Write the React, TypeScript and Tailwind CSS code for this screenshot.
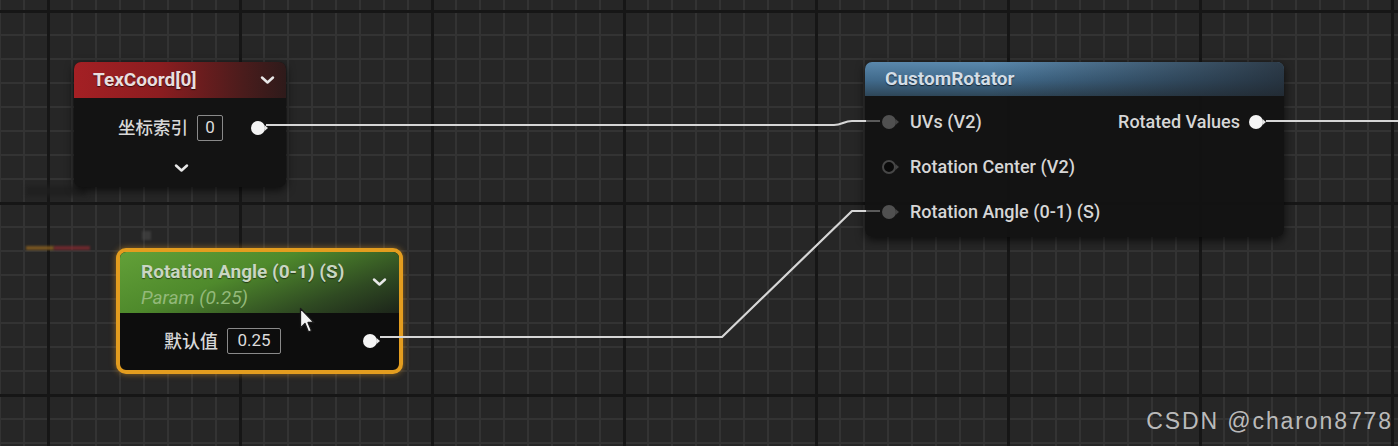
import React from 'react';

type PinKind = 'white' | 'gray' | 'hollow';

const Pin: React.FC<{ kind: PinKind }> = ({ kind }) => (
  <svg width="20" height="16" viewBox="0 0 20 16" className="shrink-0">
    {kind === 'hollow' ? (
      <circle cx="8" cy="8" r="6" fill="#0a0a0a" stroke="#474747" strokeWidth="2" />
    ) : (
      <circle cx="8" cy="8" r="7" fill={kind === 'white' ? '#f4f4f4' : '#505050'} />
    )}
    <path d="M14.5 5 L18 8 L14.5 11 Z" fill={kind === 'white' ? '#e6e6e6' : '#454545'} />
  </svg>
);

const Chevron: React.FC<{ color?: string }> = ({ color = '#e8e8e8' }) => (
  <svg width="15" height="10" viewBox="0 0 15 10" className="shrink-0">
    <path d="M2 2.5 L7.5 7.5 L13 2.5" fill="none" stroke={color} strokeWidth="2.5" strokeLinecap="round" strokeLinejoin="round" />
  </svg>
);

const ValueBox: React.FC<{ value: string; w: string }> = ({ value, w }) => (
  <div
    className={`${w} h-[26px] border-[1.5px] border-[#8a8a8a] rounded-[2px] flex items-center justify-center text-[17px] text-[#dcdcdc]`}
  >
    {value}
  </div>
);

const font = "font-['Roboto','Noto_Sans_CJK_SC',sans-serif]";

export default function App() {
  return (
    <div
      className={`relative w-[1398px] h-[446px] overflow-hidden bg-[#262626] ${font} [background-image:linear-gradient(90deg,#161616_3px,transparent_3px),linear-gradient(180deg,#161616_3px,transparent_3px),linear-gradient(90deg,#333333_2px,transparent_2px),linear-gradient(180deg,#333333_2px,transparent_2px)] [background-size:192px_192px,192px_192px,24px_24px,24px_24px] [background-position:47px_0,0_10px,-1px_0,0_10px]`}
    >
      {/* faint leftovers of an off-screen node */}
      <div className="absolute left-[26px] top-[186px] w-[60px] h-[10px] bg-[#1e1e1e]/80 blur-[2px]" />
      <div className="absolute left-[26px] top-[246px] w-[28px] h-[4px] bg-[#9a6a20]/70 blur-[1px]" />
      <div className="absolute left-[54px] top-[246px] w-[36px] h-[4px] bg-[#8a2a30]/70 blur-[1px]" />
      <div className="absolute left-[142px] top-[231px] w-[9px] h-[9px] bg-[#444]/70 blur-[1px]" />

      {/* TexCoord node */}
      <div className="absolute left-[74px] top-[62px] w-[212px] h-[125px] rounded-[7px] bg-[#131313] overflow-hidden shadow-[0_3px_10px_rgba(0,0,0,0.7)]">
        <div className="h-[36px] flex items-center justify-between pl-[19px] pr-[11px] bg-[linear-gradient(90deg,#a42024_0%,#8c1d20_40%,#4a1c1c_80%,#2e1a1a_100%)]">
          <span className="text-[19px] font-bold text-[#e9dede] [text-shadow:0_1px_1px_rgba(0,0,0,0.6)]">TexCoord[0]</span>
          <Chevron />
        </div>
        <div className="flex flex-col items-center">
          <div className="self-stretch mt-[17px] h-[26px] flex items-center justify-end pr-[16px]">
            <span className="text-[17.5px] font-medium text-[#d8d8d8] mr-[9px]">坐标索引</span>
            <ValueBox value="0" w="w-[26px]" />
            <div className="w-[27px]" />
            <Pin kind="white" />
          </div>
          <div className="mt-[22px] ml-[2px]">
            <Chevron />
          </div>
        </div>
      </div>

      {/* Rotation Angle parameter node (selected) */}
      <div className="absolute left-[116px] top-[248px] w-[287px] h-[126px] rounded-[10px] border-[4px] border-[#e39d1f] bg-[#0d0d0d] overflow-hidden shadow-[0_0_6px_rgba(235,160,40,0.55)]">
        <div className="h-[61px] relative bg-[linear-gradient(160deg,#62a038_0%,#4f8a2c_40%,#2f4a22_75%,#1c241a_100%)]">
          <div className="absolute left-[21px] top-[6px] text-[19px] font-bold text-[#c9d6c2] [text-shadow:0_1px_1px_rgba(0,0,0,0.5)]">
            Rotation Angle (0-1) (S)
          </div>
          <div className="absolute left-[21px] top-[32px] text-[19px] italic text-[#93b97a]">Param (0.25)</div>
          <div className="absolute right-[12px] top-[25px]">
            <Chevron />
          </div>
        </div>
        <div className="h-[57px] flex items-center justify-end pr-[17px] pb-[1px]">
          <span className="text-[18px] font-medium text-[#d8d8d8] mr-[9px]">默认值</span>
          <ValueBox value="0.25" w="w-[54px]" />
          <div className="w-[81px]" />
          <Pin kind="white" />
        </div>
      </div>

      {/* CustomRotator node */}
      <div className="absolute left-[865px] top-[62px] w-[419px] h-[175px] rounded-[7px] bg-[#121212]/95 overflow-hidden shadow-[0_3px_10px_rgba(0,0,0,0.7)]">
        <div className="h-[34px] flex items-center pl-[20px] bg-[linear-gradient(180deg,#5a88ac_0%,#40698a_55%,#2e4658_100%)] relative">
          <div className="absolute inset-0 bg-[linear-gradient(90deg,transparent_0%,transparent_30%,rgba(30,34,40,0.75)_100%)]" />
          <span className="relative text-[19px] font-bold text-[#d3dde6] [text-shadow:0_1px_1px_rgba(0,0,0,0.6)]">CustomRotator</span>
        </div>
        <div className="pt-[3px] pl-[16px] pr-[16px] flex">
          <div className="flex-1 flex flex-col">
            {[
              { label: 'UVs (V2)', kind: 'gray' as PinKind },
              { label: 'Rotation Center (V2)', kind: 'hollow' as PinKind },
              { label: 'Rotation Angle (0-1) (S)', kind: 'gray' as PinKind },
            ].map((row) => (
              <div key={row.label} className="h-[45px] flex items-center gap-[9px]">
                <Pin kind={row.kind} />
                <span className="text-[18px] font-medium text-[#d6d6d6]">{row.label}</span>
              </div>
            ))}
          </div>
          <div className="h-[45px] flex items-center gap-[8px]">
            <span className="text-[18px] font-medium text-[#d6d6d6]">Rotated Values</span>
            <Pin kind="white" />
          </div>
        </div>
      </div>

      {/* wires */}
      <svg className="absolute inset-0 pointer-events-none" width="1398" height="446">
        <g fill="none" stroke="#d6d6d6" strokeWidth="2.2" strokeLinejoin="round">
          <path d="M266 125 H834 C842 125 844 121 852 121 H872" />
          <path d="M380 337 H722 L852 211 H872" />
          <path d="M1266 121 H1398" />
        </g>
        <g fill="none" stroke="#5a5a5a" strokeWidth="2">
          <path d="M866 121 H880" />
          <path d="M866 211 H880" />
        </g>
      </svg>

      {/* mouse cursor */}
      <svg className="absolute left-[299px] top-[307px]" width="18" height="28" viewBox="0 0 18 28">
        <path
          d="M1.5 1.5 L1.5 21 L6 16.5 L9.5 25 L12.5 23.7 L9 15.5 L15 15.5 Z"
          fill="#f4f4f4"
          stroke="#1a1a1a"
          strokeWidth="1.3"
          strokeLinejoin="round"
        />
      </svg>

      {/* watermark */}
      <div className="absolute right-[5px] bottom-[8px] font-['Liberation_Sans',Arial,sans-serif] text-[23px] tracking-[1.9px] text-[#cfcfcf]/90">
        CSDN @charon8778
      </div>
    </div>
  );
}
